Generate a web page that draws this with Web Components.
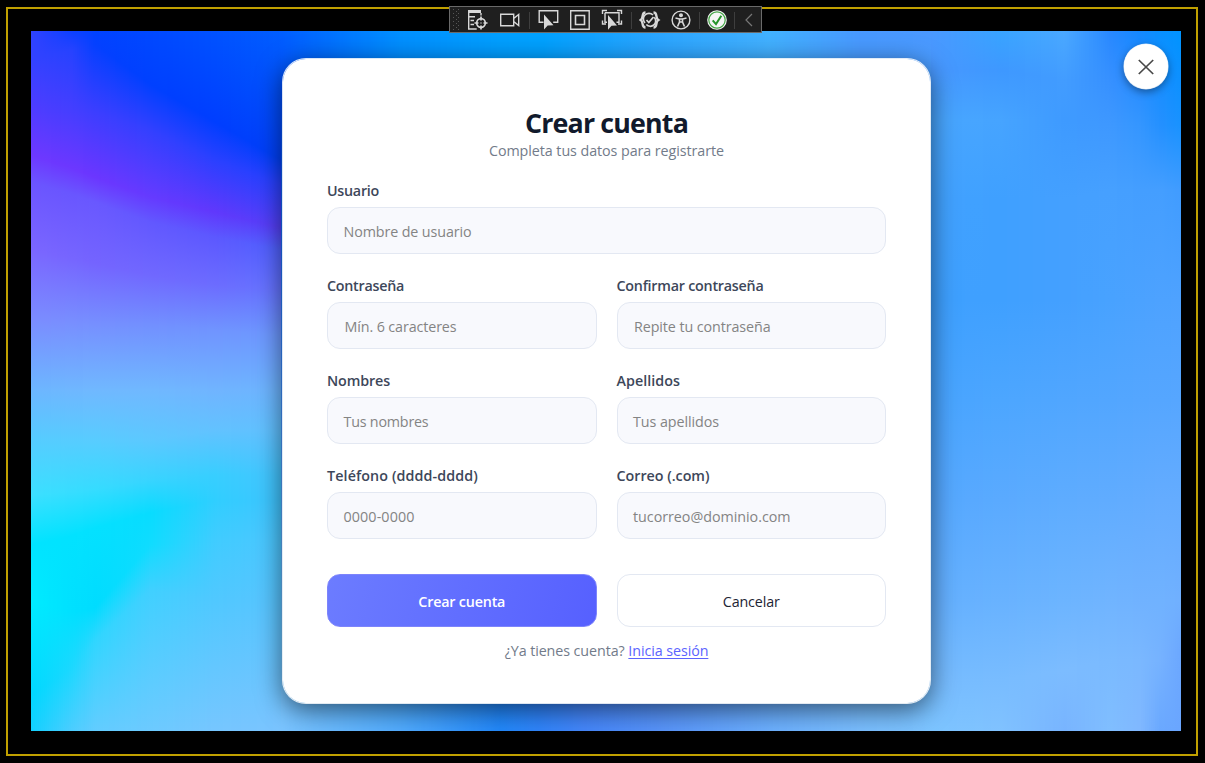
<!DOCTYPE html>
<html lang="es">
<head>
<meta charset="utf-8">
<title>Crear cuenta</title>
<style>
html,body{margin:0;height:100%;background:#000}
body{font-family:"Open Sans","Noto Sans",sans-serif;overflow:hidden}
</style>
</head>
<body>
<app-window>
  <debug-toolbar></debug-toolbar>
  <wave-stage>
    <close-button></close-button>
    <register-card></register-card>
  </wave-stage>
</app-window>
<script>
const define = (name, html, setup) => customElements.define(name, class extends HTMLElement {
  connectedCallback() {
    if (this.shadowRoot) return;
    const root = this.attachShadow({ mode: 'open' });
    const t = document.createElement('template');
    t.innerHTML = html;
    root.append(t.content.cloneNode(true));
    if (setup) setup(this, root);
  }
});

/* Text tracked to a given line width */
define('fit-text', `<style>:host{display:inline;white-space:nowrap}</style><span><slot></slot></span>`, (el, root) => {
  const s = root.querySelector('span'), w = +el.getAttribute('w');
  const n = el.textContent.length, natural = s.getBoundingClientRect().width;
  if (w && natural) s.style.letterSpacing = ((w - natural) / n).toFixed(3) + 'px';
});

/* Gradient backdrop: columns of colour stops, interpolated from left to right */
const mesh = [
  [
    [31, [31,'2f42ff'],[60,'3342ff'],[110,'4f3cff'],[155,'6d38ff'],[182,'6b54ff'],[250,'7a66ff'],[320,'7b8cff'],[390,'6cb6ff'],[440,'55ccff'],[495,'3ce0ff'],[545,'00e4ff'],[600,'00ecff'],[695,'00d8ff'],[731,'12d0ff']],
    [72, [31,'0c40ff'],[50,'2642ff'],[110,'443eff'],[168,'6c37ff'],[194,'6956ff'],[258,'7665ff'],[323,'788fff'],[390,'6fb7ff'],[440,'57ccff'],[492,'37ddff'],[536,'02e2ff'],[612,'00e0ff'],[668,'1cd8ff'],[731,'4ccdff']],
    [95, [31,'0042ff'],[44,'0440ff'],[112,'3c3eff'],[177,'6b36ff'],[202,'6958ff'],[263,'7464ff'],[325,'7690ff'],[390,'70b8ff'],[440,'58ccff'],[490,'35dcff'],[528,'04e1ff'],[608,'00dcff'],[640,'30d6ff'],[731,'62ccff']],
    [150,[31,'0048ff'],[84,'0040ff'],[130,'3340ff'],[197,'653aff'],[222,'6258ff'],[275,'7068ff'],[325,'7290ff'],[390,'70b8ff'],[440,'5cc8ff'],[480,'38d4ff'],[513,'08dcff'],[545,'10dcff'],[590,'40d0ff'],[731,'6ccaff']],
    [215,[31,'0052ff'],[122,'003eff'],[160,'2a40ff'],[212,'6038fc'],[237,'5c58ff'],[285,'6c6cff'],[330,'7094ff'],[390,'70b4ff'],[430,'62c2ff'],[475,'38ceff'],[500,'30ceff'],[540,'40ccff'],[600,'50c8ff'],[731,'76c6ff']],
    [282,[31,'005eff'],[160,'0040f8'],[185,'2840ff'],[228,'5440f8'],[250,'5062ff'],[290,'6474ff'],[335,'6c98ff'],[390,'6cb4ff'],[430,'60c0ff'],[475,'44c4ff'],[500,'40c4ff'],[540,'4cc6ff'],[600,'58c4ff'],[731,'7ac4ff']]
  ],
  [
    [282,[31,'005eff'],[100,'0050ff'],[640,'70c4ff'],[731,'7ac4ff']],
    [400,[31,'0090ff'],[100,'0088ff'],[640,'40aaff'],[731,'52acff']],
    [500,[31,'00a0ff'],[100,'0098ff'],[640,'2085ff'],[731,'2288fa']],
    [540,[31,'00a2ff'],[100,'009cff'],[640,'2a84ff'],[731,'3084fa']],
    [585,[31,'10a2ff'],[100,'10a0ff'],[640,'4286ff'],[731,'4586fa']],
    [660,[31,'2ca6ff'],[100,'28a0ff'],[640,'5090fa'],[731,'5894fa']],
    [770,[31,'42b2ff'],[100,'40a8ff'],[640,'60a8ff'],[731,'6cb0ff']],
    [860,[31,'4898ff'],[100,'48a0ff'],[640,'6cb8ff'],[731,'7abeff']],
    [931,[31,'4a98ff'],[100,'48a0ff'],[640,'6cb8ff'],[731,'7cc4ff']]
  ],
  [
    [931, [31,'4a98ff'],[70,'4898ff'],[120,'48a6ff'],[200,'42a2ff'],[300,'3ea0ff'],[400,'48a4ff'],[500,'55a8ff'],[600,'64b0ff'],[680,'76bcff'],[731,'7cc4ff']],
    [1000,[31,'38a4ff'],[70,'3e98ff'],[120,'46a4ff'],[200,'3fa0ff'],[300,'3fa0ff'],[400,'4ca6ff'],[500,'5aaaff'],[600,'68b2ff'],[680,'78bcff'],[731,'80c2ff']],
    [1065,[31,'4aa8ff'],[80,'429cff'],[120,'3e9aff'],[200,'44a0ff'],[300,'44a0ff'],[400,'50a6ff'],[500,'5eacff'],[600,'6cb4ff'],[670,'7cbcff'],[731,'78b4ff']],
    [1110,[31,'2888ff'],[80,'3690ff'],[125,'3e98ff'],[190,'46a0ff'],[300,'48a2ff'],[400,'52a6ff'],[500,'60acff'],[600,'70b4ff'],[660,'7abaff'],[731,'80beff']],
    [1140,[31,'1488ff'],[80,'268cff'],[125,'3496ff'],[190,'449eff'],[300,'4ba2ff'],[400,'54a6ff'],[500,'62acff'],[600,'70b2ff'],[660,'7ab8ff'],[731,'80b8ff']],
    [1160,[31,'0890ff'],[80,'188eff'],[125,'2490ff'],[190,'449eff'],[300,'4da2ff'],[400,'55a6ff'],[500,'64acff'],[600,'70b2ff'],[660,'76b2ff'],[731,'6aa8ff']],
    [1181,[31,'0094ff'],[80,'0c90ff'],[125,'1892ff'],[190,'409cff'],[300,'4ea2ff'],[400,'56a6ff'],[500,'64acff'],[600,'70b0ff'],[650,'6ca8ff'],[731,'6aa6ff']]
  ]
];
const rgb = h => [0, 2, 4].map(i => parseInt(h.substr(i, 2), 16));
define('wave-backdrop', `<style>:host,div{display:block;width:100%;height:100%}svg{display:block;width:100%;height:100%}</style><div></div>`, (el, root) => {
  let defs = '', rects = '', id = 0;
  for (let x = 31; x < 1181; x += 2) {
    const set = mesh.find(s => x + 1 < s[s.length - 1][0]) || mesh[2];
    let i = 0;
    while (i < set.length - 2 && x + 1 > set[i + 1][0]) i++;
    const a = set[i], b = set[i + 1], t = (x + 1 - a[0]) / (b[0] - a[0]);
    const stops = a.slice(1).map((s, k) => {
      const q = b[k + 1], c1 = rgb(s[1]), c2 = rgb(q[1]);
      const y = s[0] + (q[0] - s[0]) * t;
      return `<stop offset="${((y - 31) / 700).toFixed(4)}" stop-color="rgb(${c1.map((v, j) => Math.round(v + (c2[j] - v) * t))})"/>`;
    }).join('');
    defs += `<linearGradient id="g${id}" x1="0" y1="0" x2="0" y2="1">${stops}</linearGradient>`;
    rects += `<rect x="${x - 31}" y="0" width="2" height="700" fill="url(#g${id++})"/>`;
  }
  root.querySelector('div').innerHTML = `<svg viewBox="0 0 1150 700" preserveAspectRatio="none" shape-rendering="crispEdges"><defs>${defs}</defs>${rects}</svg>`;
});

define('app-window', `<style>
:host{display:flex;box-sizing:border-box;width:1205px;height:763px;padding:7px 7px 7px 6px;background:#000;position:relative}
.frame{flex:none;width:1192px;height:749px;box-sizing:border-box;border:2px solid #c0a000;padding:22px 0 0 23px}
</style><div class="frame"><slot></slot></div>`);

define('wave-stage', `<style>
:host{display:grid;width:1150px;height:700px;position:relative}
wave-backdrop{grid-area:1/1}
.content{grid-area:1/1;display:flex;justify-content:center;padding-top:27px;padding-left:1px;z-index:1;overflow:hidden}
</style><wave-backdrop></wave-backdrop><div class="content"><slot></slot></div>`);

define('close-button', `<style>
:host{position:absolute;right:13px;top:13px;width:44.500px;height:44.500px;display:grid;place-items:center;border-radius:50%;background:#fff;box-shadow:0 0 0 .5px rgba(255,255,255,.8),0 3px 9px rgba(0,0,0,.42)}
svg{margin-top:2px}
</style><svg width="18" height="18" viewBox="0 0 18 18" fill="none" stroke="#484848" stroke-width="1.7"><path d="M1.8 2 16.2 16M16.2 2 1.8 16"/></svg>`);

const ic = (w, body) => `<i style="width:${w}px"><svg width="22" height="22" viewBox="0 0 22 22" fill="none" stroke="#d8d8d8" stroke-width="1.4">${body}</svg></i>`;
const sep = w => `<i style="width:${w}px"><b></b></i>`;
define('debug-toolbar', `<style>
:host{position:absolute;left:449px;top:6px;width:311px;height:25px;display:flex;border:1px solid #6a6a6a;background:#1f1f1f;z-index:5}
i{display:grid;place-items:center;height:26px;flex:none}
b{width:1px;height:17px;background:#3e3e3e}
svg{display:block}
</style>
<i style="width:12px"><svg width="7" height="22" viewBox="0 0 7 22" fill="#565656">${[0,1,2,3,4,5,6,7,8,9,10].map(r => r % 2 ? `<rect x="3" y="${r*2}" width="1" height="1"/>` : `<rect x="0" y="${r*2}" width="1" height="1"/><rect x="5" y="${r*2}" width="1" height="1"/>`).join('')}</svg></i>
${ic(32, `<path d="M1 1h13v3H1z" fill="#d8d8d8" stroke="none"/><path d="M1.7 2v18h8M14 4v2.5M2 7.7h6M3.5 11.5h3.5M3.5 15.5h3.5"/><circle cx="14" cy="14" r="4.3" stroke-width="1.700"/><path d="M14 7.5v4M14 16.500v4M7.500 14h4M16.500 14h4" stroke-width="1.700"/><circle cx="14" cy="14" r=".7" fill="#d8d8d8" stroke="none"/>`)}
${ic(32, `<path d="M1.700 5.200h13v11.500h-13zM14.700 9.500l5-4v11l-5-4"/>`)}
${sep(7)}
${ic(31, `<path d="M5.500 13.300H1.200V1.700h18.500v11.600h-4.500"/><path d="M6 5.500v15l3.700-4 5.800-.3z" fill="#d8d8d8" stroke="none"/>`)}
${ic(32, `<path d="M1.700 1.700h18.500v18.500H1.700z"/><path d="M6.500 6.500h9v9h-9z" stroke-width="1.600"/>`)}
${ic(32, `<path d="M4 3.700h14v9.500h-2.500M4 3.700v9.500h2M1.500 5V1.500H6M16 1.500h4.500V5M20.500 11.500V15H17M1.500 11.500V15H5"/><path d="M7 6v14.800l3.500-4 5.500-.3z" fill="#d8d8d8" stroke="none"/>`)}
${sep(7)}
${ic(30, `<path d="M6.500 3.500c-4.500 0-1.500 5.500-4.800 7.500 3.300 2 .3 7.500 4.800 7.500M14.500 3.500c4.500 0 1.500 5.500 4.800 7.500-3.300 2-.3 7.500-4.800 7.500" stroke-width="2.300"/><path d="M6 14a5 5 0 0 1 8-8M15.300 8.300a5 5 0 0 1-8 7.200" stroke-width="1.700"/><path d="M7.500 11l2.300 2.500L14.500 8" stroke-width="1.800"/>`)}
${ic(32, `<circle cx="11" cy="11" r="8.900"/><circle cx="11" cy="6.300" r="1.300" fill="#d8d8d8"/><path d="M5.500 9l4 1v3l-2 4.500M16.500 9l-4 1v3l2 4.500M9.500 10h3M9.500 13h3" stroke-width="1.600"/>`)}
${sep(5)}
${ic(30, `<circle cx="11" cy="11" r="9.800" fill="#f5f5f5" stroke="none"/><circle cx="11" cy="11" r="8.200" stroke="#45a546" stroke-width="1.200"/><path d="M6.700 11.300l3.300 3.800 5.300-8.300" stroke="#259329" stroke-width="2"/>`)}
${sep(5)}
${ic(24, `<path d="M14 5l-6 6 6 6" stroke="#777" stroke-width="1.200"/>`)}
`);

define('form-field', `<style>
:host{display:flex;flex-direction:column;min-width:0;height:75px}
label{height:28px;line-height:24px;font-size:14.300px;font-weight:600;color:#3d475a}
.box{height:47px;box-sizing:border-box;border:1px solid #e3e8f2;border-radius:13px;background:#f8f9fd;display:flex;align-items:center;padding-left:var(--inset,15.500px);padding-top:1px;font-size:14.300px;color:#848484}
</style><label></label><div class="box"></div>`, (el, root) => {
  const g = n => el.getAttribute(n);
  root.querySelector('label').innerHTML = `<fit-text w="${g('lw')}">${g('label')}</fit-text>`;
  root.querySelector('.box').innerHTML = `<fit-text w="${g('hw')}">${g('hint')}</fit-text>`;
});

define('action-button', `<style>
:host{display:flex;align-items:center;justify-content:center;height:53px;box-sizing:border-box;border:1px solid #e3e8f2;border-radius:13px;background:#fff;color:#1c2434;font-size:14.300px;padding-top:1px}
:host([primary]){border-color:#7d84fb;background:linear-gradient(105deg,#6c7cff,#5660ff) border-box;color:#fff;font-weight:600}
</style><slot></slot>`);

define('register-card', `<style>
:host{display:block;box-sizing:border-box;width:649px;height:646px;flex:none;border:1px solid rgba(255,255,255,.85);background:#fff padding-box;border-radius:24px;padding:47px 44px 0;box-shadow:0 6px 26px rgba(0,0,0,.55)}
h1{margin:0;text-align:center;font-size:26.800px;line-height:34px;font-weight:700;color:#111a2c}
p{margin:0;text-align:center;font-size:14.300px;line-height:22px;color:#727b8a}
.grid{display:grid;grid-template-columns:1fr 1fr;column-gap:20px;row-gap:20px;margin-top:17px}
.wide{grid-column:1/3}
.actions{display:grid;grid-template-columns:1fr 1fr;column-gap:20px;margin-top:35px}
.foot{margin-top:13px}
a{color:#5c64ff;text-decoration:underline;text-underline-offset:2px}
</style>
<h1><fit-text w="163">Crear cuenta</fit-text></h1>
<p><fit-text w="235">Completa tus datos para registrarte</fit-text></p>
<div class="grid">
<form-field class="wide" label="Usuario" lw="52" hint="Nombre de usuario" hw="128"></form-field>
<form-field label="Contraseña" lw="77" hint="Mín. 6 caracteres" hw="112" style="--inset:16.500px"></form-field>
<form-field label="Confirmar contraseña" lw="147" hint="Repite tu contraseña" hw="136.500" style="--inset:16.500px"></form-field>
<form-field label="Nombres" lw="63" hint="Tus nombres" hw="85"></form-field>
<form-field label="Apellidos" lw="63.500" hint="Tus apellidos" hw="86"></form-field>
<form-field label="Teléfono (dddd-dddd)" lw="151" hint="0000-0000" hw="71"></form-field>
<form-field label="Correo (.com)" lw="93" hint="tucorreo@dominio.com" hw="157.500"></form-field>
</div>
<div class="actions">
<action-button primary><fit-text w="87">Crear cuenta</fit-text></action-button>
<action-button><fit-text w="57">Cancelar</fit-text></action-button>
</div>
<p class="foot"><fit-text w="120">¿Ya tienes cuenta?</fit-text> <a><fit-text w="80">Inicia sesión</fit-text></a></p>
`);
</script>
</body>
</html>
